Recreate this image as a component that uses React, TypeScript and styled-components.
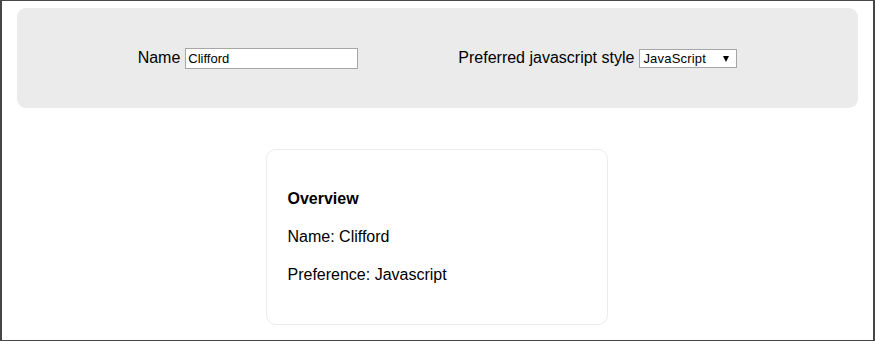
import React, { useState } from "react";
import styled, { createGlobalStyle } from "styled-components";

const GlobalStyle = createGlobalStyle`
  html, body { margin: 0; padding: 0; background: #fff; }
  body { font-family: "Liberation Sans", Arial, sans-serif; color: #000; }
`;

const Frame = styled.div`
  box-sizing: border-box;
  width: 875px;
  height: 341px;
  border-style: solid;
  border-color: #464646;
  border-width: 1px 2px 1px 2px;
  padding: 7px 15px 0 15px;
  display: flex;
  flex-direction: column;
  align-items: center;
  overflow: hidden;
`;

const Header = styled.header`
  box-sizing: border-box;
  align-self: stretch;
  height: 100px;
  background: #ebebeb;
  border-radius: 9px;
  display: flex;
  align-items: center;
  justify-content: center;
  gap: 100px;
`;

const Field = styled.label`
  display: flex;
  align-items: center;
  gap: 5px;
  font-size: 16px;
  line-height: 18px;
`;

const TextInput = styled.input`
  box-sizing: border-box;
  width: 173px;
  height: 21px;
  padding: 1px 2px;
  border: 1px solid #a6a6a6;
  background: #fff;
  font-family: "Liberation Sans", Arial, sans-serif;
  font-size: 13px;
  color: #000;
  outline: none;
`;

const SelectWrap = styled.div`
  position: relative;
  display: flex;
`;

const Select = styled.select`
  box-sizing: border-box;
  width: 98px;
  height: 19px;
  padding: 0 16px 0 3px;
  border: 1px solid #a6a6a6;
  border-radius: 0;
  background: #fff;
  appearance: none;
  -webkit-appearance: none;
  font-family: "Liberation Sans", Arial, sans-serif;
  font-size: 13px;
  letter-spacing: 0.2px;
  color: #000;
  outline: none;
`;

const Arrow = styled.span`
  position: absolute;
  right: 8px;
  top: 7px;
  width: 0;
  height: 0;
  border-left: 3.5px solid transparent;
  border-right: 3.5px solid transparent;
  border-top: 6px solid #000;
  pointer-events: none;
`;

const Card = styled.section`
  box-sizing: border-box;
  width: 342px;
  margin-top: 41px;
  margin-right: 2px;
  padding: 38px 20px 38px 21px;
  border: 1px solid #ececec;
  border-radius: 10px;
  display: flex;
  flex-direction: column;
  gap: 16px;
`;

const Line = styled.div<{ $bold?: boolean }>`
  font-size: 16px;
  line-height: 22px;
  font-weight: ${(p) => (p.$bold ? 700 : 400)};
`;

export default function App() {
  const [name, setName] = useState("Clifford");
  const [pref, setPref] = useState("JavaScript");
  return (
    <>
      <GlobalStyle />
      <Frame>
        <Header>
          <Field>
            Name
            <TextInput value={name} onChange={(e) => setName(e.target.value)} />
          </Field>
          <Field>
            Preferred javascript style
            <SelectWrap>
              <Select value={pref} onChange={(e) => setPref(e.target.value)}>
                <option>JavaScript</option>
                <option>TypeScript</option>
              </Select>
              <Arrow />
            </SelectWrap>
          </Field>
        </Header>
        <Card>
          <Line $bold>Overview</Line>
          <Line>Name: {name}</Line>
          <Line>Preference: {pref === "JavaScript" ? "Javascript" : "Typescript"}</Line>
        </Card>
      </Frame>
    </>
  );
}
